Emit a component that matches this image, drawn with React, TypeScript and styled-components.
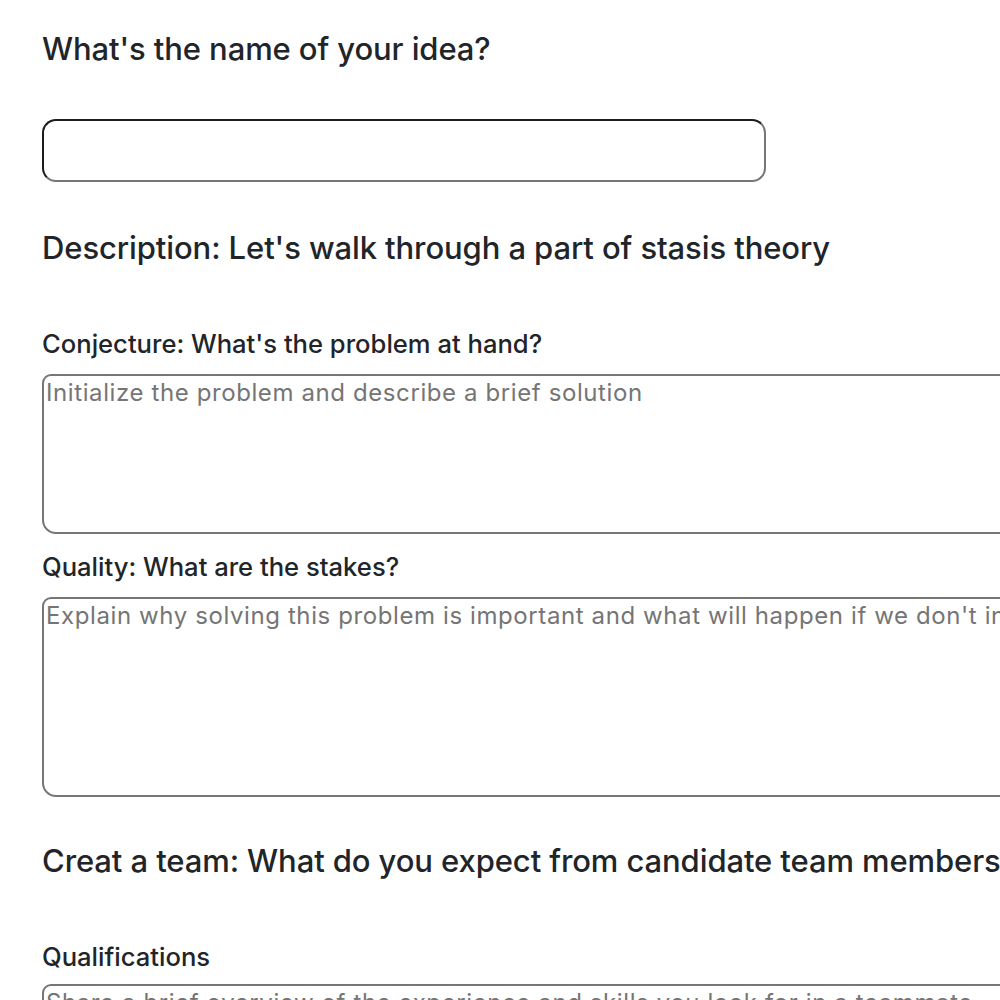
import React from 'react';
import styled, { createGlobalStyle } from 'styled-components';

const GlobalStyle = createGlobalStyle`
  html, body {
    margin: 0;
    padding: 0;
    background: #ffffff;
    overflow: hidden;
  }
  body {
    font-family: Inter, "Noto Sans", sans-serif;
    color: #212529;
  }
`;

const Form = styled.form`
  display: flex;
  flex-direction: column;
  padding: 27px 0 0 42px;
  width: 1300px;
`;

const Heading = styled.h2<{ $gap: number }>`
  margin: 0 0 ${(p) => p.$gap}px;
  font-size: 31px;
  font-weight: 500;
  line-height: 44px;
  letter-spacing: -0.1px;
  color: #212529;
  white-space: nowrap;
`;

const Label = styled.label<{ $gap: number }>`
  display: block;
  margin: 0 0 ${(p) => p.$gap}px;
  font-size: 25.6px;
  font-weight: 500;
  line-height: 30px;
  color: #212529;
  white-space: nowrap;
`;

const TextInput = styled.input`
  box-sizing: border-box;
  width: 724px;
  height: 63px;
  margin: 0 0 44px;
  border: 2px solid;
  border-color: #1c1c1c #767676 #767676 #1c1c1c;
  border-radius: 14px;
  background: #fff;
  outline: none;
`;

const TextArea = styled.textarea<{ $height: number; $gap: number }>`
  box-sizing: border-box;
  display: block;
  width: 1200px;
  height: ${(p) => p.$height}px;
  margin: 0 0 ${(p) => p.$gap}px;
  padding: 2px;
  border: 2px solid #767676;
  border-radius: 9px 14px 14px 14px;
  font-family: Inter, "Noto Sans", sans-serif;
  font-size: 24px;
  letter-spacing: 0.6px;
  line-height: 30px;
  resize: none;
  outline: none;
  &::placeholder {
    color: #757575;
  }
`;

export default function App() {
  return (
    <>
      <GlobalStyle />
      <Form>
        <Heading $gap={48}>What's the name of your idea?</Heading>
        <TextInput type="text" />
        <Heading $gap={59}>Description: Let's walk through a part of stasis theory</Heading>
        <Label $gap={15}>Conjecture: What's the problem at hand?</Label>
        <TextArea
          $height={160}
          $gap={18}
          placeholder="Initialize the problem and describe a brief solution"
        />
        <Label $gap={15}>Quality: What are the stakes?</Label>
        <TextArea
          $height={200}
          $gap={42}
          placeholder="Explain why solving this problem is important and what will happen if we don't intervene"
        />
        <Heading $gap={59}>Creat a team: What do you expect from candidate team members?</Heading>
        <Label $gap={12}>Qualifications</Label>
        <TextArea
          $height={160}
          $gap={14}
          placeholder="Share a brief overview of the experience and skills you look for in a teammate"
        />
      </Form>
    </>
  );
}
